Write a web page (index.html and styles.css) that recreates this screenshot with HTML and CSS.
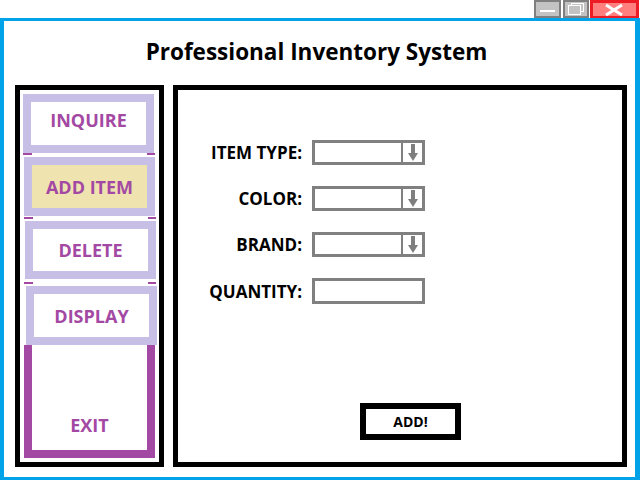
FILE: index.html
```html
<!DOCTYPE html>
<html>
<head>
<meta charset="utf-8">
<link rel="stylesheet" href="styles.css">
</head>
<body>
<div class="window">
  <div class="titlebar">
    <div class="ctrl ctrl-min"><svg width="21" height="14" viewBox="0 0 21 14"><rect x="3" y="8" width="15" height="2" fill="#fff"/></svg></div>
    <div class="ctrl ctrl-max"><svg width="20" height="14" viewBox="0 0 20 14"><rect x="5.5" y="1.5" width="12" height="8" fill="none" stroke="#fff"/><rect x="2.5" y="3.5" width="12" height="9" fill="#c3c3c3" stroke="#fff"/></svg></div>
    <div class="ctrl ctrl-close"><svg width="43" height="14" viewBox="0 0 43 14"><path d="M13 2 L29 12 M29 2 L13 12" stroke="#fff" stroke-width="3"/></svg></div>
  </div>
  <div class="frame">
    <h1 class="title">Professional Inventory System</h1>
    <div class="body">
      <nav class="menu">
        <div class="btn btn-1">INQUIRE</div>
        <div class="sep sep-1"></div>
        <div class="btn btn-2 active">ADD ITEM</div>
        <div class="sep sep-2"></div>
        <div class="btn btn-3">DELETE</div>
        <div class="sep sep-3"></div>
        <div class="btn btn-4">DISPLAY</div>
        <div class="exit">EXIT</div>
      </nav>
      <section class="panel">
        <div class="fields">
          <label class="label">ITEM TYPE:</label>
          <div class="select"><div class="arrow"><svg width="10" height="18" viewBox="0 0 10 18"><rect x="3" y="0" width="4" height="9" fill="#7f7f7f"/><polygon points="0,9 10,9 5,17" fill="#7f7f7f"/></svg></div></div>
          <label class="label">COLOR:</label>
          <div class="select"><div class="arrow"><svg width="10" height="18" viewBox="0 0 10 18"><rect x="3" y="0" width="4" height="9" fill="#7f7f7f"/><polygon points="0,9 10,9 5,17" fill="#7f7f7f"/></svg></div></div>
          <label class="label">BRAND:</label>
          <div class="select"><div class="arrow"><svg width="10" height="18" viewBox="0 0 10 18"><rect x="3" y="0" width="4" height="9" fill="#7f7f7f"/><polygon points="0,9 10,9 5,17" fill="#7f7f7f"/></svg></div></div>
          <label class="label">QUANTITY:</label>
          <div class="textbox"></div>
        </div>
        <div class="add-btn">ADD!</div>
      </section>
    </div>
  </div>
</div>
</body>
</html>
```
FILE: styles.css
```css
* { box-sizing: border-box; }
body {
  margin: 0;
  font-family: "Open Sans", "Noto Sans", sans-serif;
  background: #fff;
}
.window {
  width: 640px;
  height: 480px;
  display: flex;
  flex-direction: column;
  overflow: hidden;
  background: #fff;
}
.titlebar {
  height: 18px;
  display: flex;
  justify-content: flex-end;
  padding-right: 1px;
}
.ctrl {
  height: 18px;
  border: 2px solid #7f7f7f;
  background: #c3c3c3;
  display: flex;
  align-items: center;
  justify-content: center;
}
.ctrl-min { width: 27px; margin-right: 2px; }
.ctrl-max { width: 26px; margin-right: 1px; }
.ctrl-close { width: 49px; border-color: #ed1c24; background: #ff7f7f; border-width: 3px 3px 2px 3px; }
.frame {
  flex: 1;
  border-style: solid;
  border-color: #00a2e8;
  border-width: 3px 5px 3px 4px;
  display: flex;
  flex-direction: column;
}
.title {
  margin: 0;
  height: 64px;
  padding: 0 6px 4px 0;
  display: flex;
  align-items: center;
  justify-content: center;
  font-size: 22.5px;
  font-weight: 700;
  color: #000;
}
.body {
  display: flex;
  gap: 9px;
  padding: 0 8px 0 11px;
  height: 382px;
}
.menu {
  width: 149px;
  border: 5px solid #000;
  display: flex;
  flex-direction: column;
  padding-top: 4px;
}
.btn {
  width: 131px;
  height: 59px;
  border: 8px solid #c8bfe7;
  background: #fff;
  display: flex;
  align-items: center;
  justify-content: center;
  color: #a349a4;
  font-size: 18px;
  font-weight: 700;
}
.btn.active { background: #efe4b0; }
.btn-1 { margin-left: 3px; padding-bottom: 7px; }
.btn-2 { margin-left: 4px; margin-top: 2px; }
.btn-3 { margin-left: 5px; margin-top: 2px; height: 58px; }
.btn-4 { margin-left: 6px; margin-top: 2px; }
.sep {
  width: 132px;
  height: 2px;
  background: linear-gradient(to right, #a349a4 9px, transparent 9px, transparent 124px, #a349a4 124px);
}
.sep-1 { margin-left: 3px; }
.sep-2 { margin-left: 4px; margin-top: 1px; }
.sep-3 { margin-left: 4px; margin-top: 3px; }
.exit {
  width: 131px;
  height: 113px;
  margin-left: 4px;
  border: 8px solid #a349a4;
  border-top: 0;
  display: flex;
  align-items: flex-end;
  justify-content: center;
  padding-bottom: 13px;
  color: #a349a4;
  font-size: 18px;
  font-weight: 700;
}
.panel {
  flex: 1;
  border: 5px solid #000;
  display: flex;
  flex-direction: column;
}
.fields {
  margin-top: 50px;
  display: grid;
  grid-template-columns: 124px 113px;
  column-gap: 10px;
  row-gap: 21px;
  align-items: center;
}
.label {
  text-align: right;
  font-size: 17px;
  font-weight: 700;
  color: #000;
  white-space: nowrap;
}
.select {
  height: 25px;
  border: 3px solid #808080;
  background: #fff;
  display: flex;
  justify-content: flex-end;
}
.arrow {
  width: 21px;
  border-left: 2px solid #808080;
  display: flex;
  align-items: center;
  justify-content: center;
}
.textbox {
  height: 26px;
  border: 3px solid #808080;
  background: #fff;
}
.add-btn {
  margin-top: auto;
  margin-left: 182px;
  margin-bottom: 22px;
  width: 101px;
  height: 37px;
  border: 6px solid #000;
  display: flex;
  align-items: center;
  justify-content: center;
  font-size: 14px;
  font-weight: 700;
  color: #000;
}
```
